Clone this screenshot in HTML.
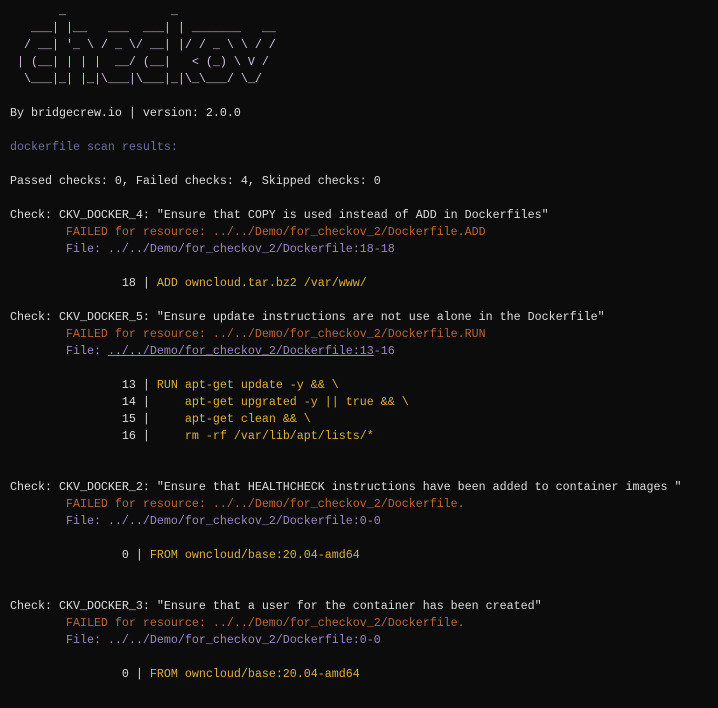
<!DOCTYPE html>
<html><head><meta charset="utf-8"><style>
html,body{margin:0;padding:0;background:#0c0c0c;width:718px;height:708px;overflow:hidden}
pre{margin:0;padding:3px 0 0 10px;font-family:"Liberation Mono",monospace;font-size:11.67px;line-height:17px;color:#dcdcdc;white-space:pre}
.a{color:#d3c0e0}
.b{color:#6c6f9a}
.f{color:#b5653c}
.p{color:#9b86c0}
.y{color:#d8b13d}
.u{text-decoration:underline}
</style></head><body><pre><span class="a">       _               _
   ___| |__   ___  ___| | _______   __
  / __| '_ \ / _ \/ __| |/ / _ \ \ / /
 | (__| | | |  __/ (__|   &lt; (_) \ V /
  \___|_| |_|\___|\___|_|\_\___/ \_/</span>

By bridgecrew.io | version: 2.0.0

<span class="b">dockerfile scan results:</span>

Passed checks: 0, Failed checks: 4, Skipped checks: 0

Check: CKV_DOCKER_4: "Ensure that COPY is used instead of ADD in Dockerfiles"
<span class="f">        FAILED for resource: ../../Demo/for_checkov_2/Dockerfile.ADD</span>
<span class="p">        File: ../../Demo/for_checkov_2/Dockerfile:18-18</span>

                18 | <span class="y">ADD owncloud.tar.bz2 /var/www/</span>

Check: CKV_DOCKER_5: "Ensure update instructions are not use alone in the Dockerfile"
<span class="f">        FAILED for resource: ../../Demo/for_checkov_2/Dockerfile.RUN</span>
<span class="p">        File: <span class="u">../../Demo/for_checkov_2/Dockerfile:13</span>-16</span>

                13 | <span class="y">RUN apt-get update -y &amp;&amp; \</span>
                14 | <span class="y">    apt-get upgrated -y || true &amp;&amp; \</span>
                15 | <span class="y">    apt-get clean &amp;&amp; \</span>
                16 | <span class="y">    rm -rf /var/lib/apt/lists/*</span>


Check: CKV_DOCKER_2: "Ensure that HEALTHCHECK instructions have been added to container images "
<span class="f">        FAILED for resource: ../../Demo/for_checkov_2/Dockerfile.</span>
<span class="p">        File: ../../Demo/for_checkov_2/Dockerfile:0-0</span>

                0 | <span class="y">FROM owncloud/base:20.04-amd64</span>


Check: CKV_DOCKER_3: "Ensure that a user for the container has been created"
<span class="f">        FAILED for resource: ../../Demo/for_checkov_2/Dockerfile.</span>
<span class="p">        File: ../../Demo/for_checkov_2/Dockerfile:0-0</span>

                0 | <span class="y">FROM owncloud/base:20.04-amd64</span>
</pre></body></html>
